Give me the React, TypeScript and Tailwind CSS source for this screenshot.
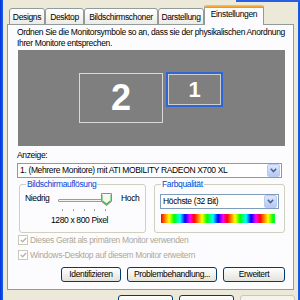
import React from "react";

function Tab({ label, w, active }: { label: string; w: string; active?: boolean }) {
  if (active) {
    return (
      <div className={`${w} h-[20px] flex flex-col bg-[#fcfcfe] border-x border-[#919b9c] rounded-t-[3px] overflow-hidden`}>
        <div className="h-[3px] bg-gradient-to-b from-[#ffc83c] to-[#e68b2c]" />
        <div className="flex-1 flex items-start justify-center pt-[1px]">{label}</div>
      </div>
    );
  }
  return (
    <div className={`${w} h-[17px] flex items-start justify-center pt-[3px] bg-gradient-to-b from-white to-[#ecebe6] border border-[#919b9c] rounded-t-[3px]`}>
      {label}
    </div>
  );
}

function XPButton({ label, w }: { label: string; w: string }) {
  return (
    <div className={`${w} h-[15px] flex items-center justify-center rounded-[3px] border border-[#003c74] bg-gradient-to-b from-white to-[#e3e2da]`}>
      {label}
    </div>
  );
}

function Chevron() {
  return (
    <div className="w-[13px] h-[13px] flex items-center justify-center rounded-[2px] border border-[#b9cbf3] bg-gradient-to-b from-[#dce7fd] to-[#b4c8f6]">
      <svg width="7" height="5" viewBox="0 0 7 5">
        <path d="M0.8 0.8 L3.5 3.6 L6.2 0.8" stroke="#4d6185" strokeWidth="1.5" fill="none" />
      </svg>
    </div>
  );
}

function CheckRow({ label }: { label: string }) {
  return (
    <div className="h-[10px] flex items-center gap-[2px] text-[#aca899]">
      <div className="w-[10px] h-[10px] border border-[#cac8bb] bg-white flex items-center justify-center">
        <svg width="7" height="6" viewBox="0 0 7 6">
          <path d="M0.8 3 L2.6 4.8 L6.2 1" stroke="#b8b5a8" strokeWidth="1.4" fill="none" />
        </svg>
      </div>
      <span className="whitespace-nowrap">{label}</span>
    </div>
  );
}

export default function App() {
  const ticks = [0, 1, 2, 3, 4];
  return (
    <div className="relative w-[300px] h-[300px] overflow-hidden flex bg-[#ece9d8] font-['Liberation_Sans',sans-serif] text-[8.5px] leading-[11px] tracking-[-0.35px] text-black">
      <div className="absolute top-0 right-0 w-[64px] h-[2px] bg-[#2a5fe0]" />
      <div className="w-[3px] h-full shrink-0 bg-gradient-to-r from-[#0831d9] to-[#1c5fe8]" />
      <div className="flex-1 flex flex-col px-[4px]">
        <div className="relative z-10 mt-[5px] -mb-px h-[20px] shrink-0 flex items-end pl-[2px]">
          <Tab label="Designs" w="w-[36px]" />
          <Tab label="Desktop" w="w-[39px]" />
          <Tab label="Bildschirmschoner" w="w-[74px]" />
          <Tab label="Darstellung" w="w-[46px]" />
          <Tab label="Einstellungen" w="w-[60px]" active />
        </div>
        <div className="h-[266px] shrink-0 border border-[#919b9c] bg-[#fcfcfe] flex flex-col pl-[10px] pr-[8px] pt-[2px]">
          <div className="-ml-px whitespace-nowrap">
            Ordnen Sie die Monitorsymbole so an, dass sie der physikalischen Anordnung
            <br />
            Ihrer Monitore entsprechen.
          </div>
          <div className="relative mt-[1px] h-[96px] shrink-0 bg-[#7f7f7f]">
            <div className="absolute left-[61px] top-[23px] w-[84px] h-[50px] border border-[#d8d8d8] flex items-center justify-center text-white font-bold text-[36px] leading-none tracking-normal">
              2
            </div>
            <div className="absolute left-[148px] top-[22px] w-[57px] h-[35px] border-2 border-[#2e66d6] flex">
              <div className="flex-1 border border-[#cfcfcf] flex items-center justify-center text-white font-bold text-[22px] leading-none tracking-normal">
                1
              </div>
            </div>
          </div>
          <div className="mt-[4px] -ml-px">Anzeige:</div>
          <div className="mt-[2px] -ml-px w-[265px] h-[15px] shrink-0 border border-[#7f9db9] bg-white flex items-center pl-[2px] pr-px">
            <span className="flex-1 whitespace-nowrap">1. (Mehrere Monitore) mit ATI MOBILITY RADEON X700 XL</span>
            <Chevron />
          </div>
          <div className="mt-[1px] flex gap-[8px] ml-px shrink-0">
            <fieldset className="w-[127px] h-[54px] border border-[#d0d0bf] rounded-[3px] px-[5px]">
              <legend className="px-[1px] ml-[1px] text-[#0046d5]">Bildschirmauflösung</legend>
              <div className="mt-[3px] flex items-start">
                <span className="w-[33px]">Niedrig</span>
                <div className="w-[60px] flex flex-col">
                  <div className="relative h-[12px]">
                    <div className="absolute left-0 top-[6px] w-[52px] h-[3px] border border-[#9d9c99] bg-[#f4f3ee] rounded-[1px]" />
                    <svg className="absolute left-[43px] top-0" width="11" height="13" viewBox="0 0 11 13">
                      <path d="M0.5 0.5 H10.5 V8.5 L5.5 12.5 L0.5 8.5 Z" fill="#f7f7f3" stroke="#8c8c88" />
                      <path d="M1.5 8 L5.5 11.2 L9.5 8" stroke="#3cb043" strokeWidth="1.3" fill="none" />
                      <path d="M1.5 2 V8 M9.5 2 V8" stroke="#7fd07f" strokeWidth="0.8" fill="none" />
                    </svg>
                  </div>
                  <div className="mt-[4px] h-[2px] flex justify-between w-[52px] pl-[4px] pr-[4px]">
                    {ticks.map((t) => (
                      <div key={t} className="w-px h-[2px] bg-[#a0a0a0]" />
                    ))}
                  </div>
                </div>
                <span className="ml-[3px]">Hoch</span>
              </div>
              <div className="mt-[4px] text-center pr-[6px]">1280 x 800 Pixel</div>
            </fieldset>
            <fieldset className="w-[129px] h-[54px] border border-[#d0d0bf] rounded-[3px] px-[5px]">
              <legend className="px-[1px] ml-[1px] text-[#0046d5]">Farbqualität</legend>
              <div className="mt-[4px] h-[15px] w-[119px] border border-[#7f9db9] bg-white flex items-center pl-[2px] pr-px">
                <span className="flex-1">Höchste (32 Bit)</span>
                <Chevron />
              </div>
              <div className="mt-[5px] ml-px h-[9px] w-[114px] bg-[image:repeating-linear-gradient(90deg,#ff0000_0px,#ffff00_8px,#00ff00_13px,#00ffff_19px,#0000ff_24px,#ff00ff_29px,#ff0000_33px)]" />
            </fieldset>
          </div>
          <div className="mt-[2px] flex flex-col gap-[5px] shrink-0">
            <CheckRow label="Dieses Gerät als primären Monitor verwenden" />
            <CheckRow label="Windows-Desktop auf diesem Monitor erweitern" />
          </div>
          <div className="mt-[7px] flex justify-end gap-[6px] shrink-0">
            <XPButton label="Identifizieren" w="w-[60px]" />
            <XPButton label="Problembehandlung..." w="w-[90px]" />
            <XPButton label="Erweitert" w="w-[62px]" />
          </div>
        </div>
        <div className="mt-[5px] flex justify-end gap-[6px] -mr-px shrink-0">
          <div className="w-[55px] h-[15px] rounded-[3px] border border-[#003c74] bg-gradient-to-b from-white to-[#e3e2da]" />
          <div className="w-[55px] h-[15px] rounded-[3px] border border-[#003c74] bg-gradient-to-b from-white to-[#e3e2da]" />
          <div className="w-[55px] h-[15px] rounded-[3px] border border-[#c9c7ba] bg-[#f5f4ea]" />
        </div>
      </div>
      <div className="w-[5px] h-full shrink-0 bg-gradient-to-r from-[#1c5fe8] to-[#0831d9]" />
    </div>
  );
}
